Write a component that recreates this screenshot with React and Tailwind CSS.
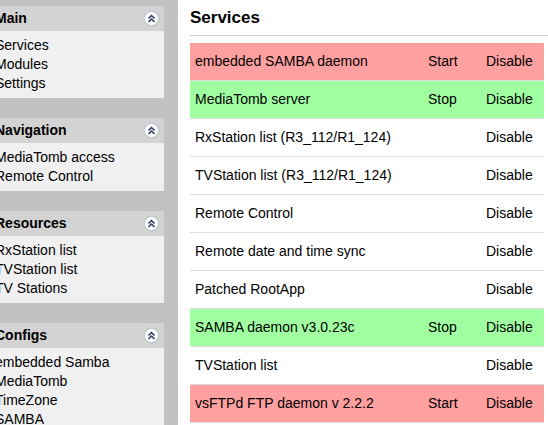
import { useState } from 'react';

const panels = [
    { title: 'Main', items: ['Services', 'Modules', 'Settings'] },
    { title: 'Navigation', items: ['MediaTomb access', 'Remote Control'] },
    { title: 'Resources', items: ['RxStation list', 'TVStation list', 'TV Stations'] },
    { title: 'Configs', items: ['embedded Samba', 'MediaTomb', 'TimeZone', 'SAMBA', 'vsFTPd'] },
];

const services = [
    { name: 'embedded SAMBA daemon', state: 'stopped' },
    { name: 'MediaTomb server', state: 'running' },
    { name: 'RxStation list (R3_112/R1_124)' },
    { name: 'TVStation list (R3_112/R1_124)' },
    { name: 'Remote Control' },
    { name: 'Remote date and time sync' },
    { name: 'Patched RootApp' },
    { name: 'SAMBA daemon v3.0.23c', state: 'running' },
    { name: 'TVStation list' },
    { name: 'vsFTPd FTP daemon v 2.2.2', state: 'stopped' },
];

const CollapseIcon = () => (
    <span className="flex items-center justify-center w-[15px] h-[15px] rounded-full bg-white border border-[#c8cbd8] shadow-[0_0_1px_#9aa]">
        <svg width="9" height="9" viewBox="0 0 9 9" fill="none" stroke="#2c3564" strokeWidth="1.5">
            <path d="M1.5 4.5 L4.5 1.5 L7.5 4.5" />
            <path d="M1.5 8 L4.5 5 L7.5 8" />
        </svg>
    </span>
);

const Panel = ({ title, items }) => {
    const [open, setOpen] = useState(true);
    return (
        <div className="ml-[-12px] w-[176px] mb-[20px]">
            <div className="h-[25px] bg-[#d3d3d3] flex items-center justify-between pl-[7px] pr-[5px]">
                <span className="font-bold text-[14px] text-black">{title}</span>
                <button onClick={() => setOpen(!open)}><CollapseIcon /></button>
            </div>
            {open && (
                <ul className="bg-[#f0f0f0] py-[5px] pl-[7px]">
                    {items.map(item => (
                        <li key={item} className="text-[14px] leading-[19px] text-black">{item}</li>
                    ))}
                </ul>
            )}
        </div>
    );
};

const App = () => {
    return (
        <div className="flex h-[425px] overflow-hidden bg-white font-['Liberation_Sans',Arial,sans-serif]">
            <div className="w-[178px] shrink-0 bg-[#c2c2c2] pt-[6px] overflow-hidden">
                {panels.map(p => <Panel key={p.title} {...p} />)}
            </div>
            <div className="flex-1 pl-[12px] overflow-hidden">
                <h1 className="text-[17px] font-bold leading-[22px] pt-[7px] pb-[6px] border-b border-[#cfcfcf] text-black">Services</h1>
                <div className="mt-[7px] w-[354px]">
                    {services.map(s => (
                        <div
                            key={s.name}
                            className={
                                'grid grid-cols-[1fr_58px_58px] items-center h-[38px] border-b border-[#dedede] text-[14px] text-black ' +
                                (s.state === 'stopped' ? 'bg-[#ffa0a0]' : s.state === 'running' ? 'bg-[#a0ffa0]' : 'bg-white')
                            }
                        >
                            <span className="pl-[5px] whitespace-nowrap">{s.name}</span>
                            <span>{s.state === 'stopped' ? 'Start' : s.state === 'running' ? 'Stop' : ''}</span>
                            <span>Disable</span>
                        </div>
                    ))}
                </div>
            </div>
        </div>
    );
};

export default App;
